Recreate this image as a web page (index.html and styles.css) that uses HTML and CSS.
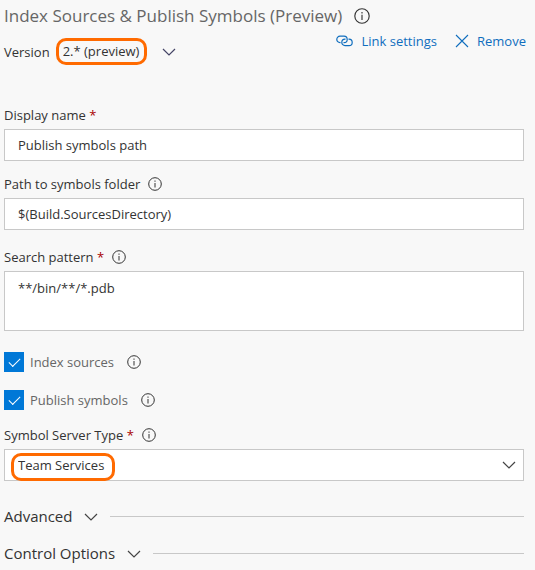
FILE: index.html
```html
<!DOCTYPE html>
<html lang="en">
<head>
<meta charset="utf-8">
<meta name="viewport" content="width=device-width, initial-scale=1">
<title>Index Sources &amp; Publish Symbols</title>
<link rel="stylesheet" href="styles.css">
</head>
<body>
<svg class="defs" aria-hidden="true">
  <symbol id="info" viewBox="0 0 14 14">
    <circle cx="7" cy="7" r="6.300" fill="none" stroke="currentColor" stroke-width="1"/>
    <path d="M7 6v4.500M7 3.500v1.300" fill="none" stroke="currentColor" stroke-width="1"/>
  </symbol>
  <symbol id="chevron" viewBox="0 0 14 8">
    <path d="M1 1l6 6 6-6" fill="none" stroke="currentColor" stroke-width="1.2"/>
  </symbol>
</svg>
<main class="task">
  <header>
    <h1 class="title">Index Sources &amp; Publish Symbols (Preview)
      <svg class="info info-large" role="img" aria-label="Info"><use href="#info"/></svg></h1>
    <div class="toolbar">
      <div class="version">
        <label for="version">Version</label>
        <span class="ring"><select id="version"><option>2.* (preview)</option></select></span>
        <svg class="chevron" aria-hidden="true"><use href="#chevron"/></svg>
      </div>
      <div class="actions">
        <button type="button" class="action">
          <svg class="link-icon" viewBox="0 0 17 12" aria-hidden="true"><path d="M4.500 7.600H4A3.200 3.200 0 0 1 4 1.200H8A3.200 3.200 0 0 1 8 7.600H7.500M12.500 4.200H13A3.200 3.200 0 0 1 13 10.600H9A3.200 3.200 0 0 1 9 4.200H9.500" fill="none" stroke="currentColor" stroke-width="1.200"/></svg>
          Link settings</button>
        <button type="button" class="action">
          <svg class="remove-icon" viewBox="0 0 14 14" aria-hidden="true"><path d="M1 1l12 12M13 1L1 13" fill="none" stroke="currentColor" stroke-width="1.1"/></svg>
          Remove</button>
      </div>
    </div>
  </header>
  <form>
    <div class="field">
      <div class="caption"><label for="name">Display name <span class="req">*</span></label></div>
      <input class="box" id="name" type="text" value="Publish symbols path">
    </div>
    <div class="field">
      <div class="caption"><label for="path">Path to symbols folder</label>
        <svg class="info" role="img" aria-label="Info"><use href="#info"/></svg></div>
      <input class="box" id="path" type="text" value="$(Build.SourcesDirectory)">
    </div>
    <div class="field field-pattern">
      <div class="caption"><label for="pattern">Search pattern <span class="req">*</span></label>
        <svg class="info" role="img" aria-label="Info"><use href="#info"/></svg></div>
      <textarea class="box area" id="pattern">**/bin/**/*.pdb</textarea>
    </div>
    <div class="checks">
      <div class="check"><input type="checkbox" id="index" checked><label for="index">Index sources</label>
        <svg class="info" role="img" aria-label="Info"><use href="#info"/></svg></div>
      <div class="check"><input type="checkbox" id="publish" checked><label for="publish">Publish symbols</label>
        <svg class="info" role="img" aria-label="Info"><use href="#info"/></svg></div>
    </div>
    <div class="field">
      <div class="caption"><label for="server">Symbol Server Type <span class="req">*</span></label>
        <svg class="info" role="img" aria-label="Info"><use href="#info"/></svg></div>
      <div class="select-wrap">
        <select class="box" id="server"><option>Team Services</option></select>
        <span class="ring ring-over"></span>
        <svg class="chevron chevron-over" aria-hidden="true"><use href="#chevron"/></svg>
      </div>
    </div>
    <div class="sections">
      <button type="button" class="section">Advanced <svg class="chevron" aria-hidden="true"><use href="#chevron"/></svg></button>
      <button type="button" class="section">Control Options <svg class="chevron" aria-hidden="true"><use href="#chevron"/></svg></button>
    </div>
  </form>
</main>
</body>
</html>
```
FILE: styles.css
```css
* { box-sizing: border-box; }

body {
  margin: 0;
  background: #f8f8f8;
  color: #333;
  font: 13px/20px "Open Sans", "Noto Sans", sans-serif;
}

input, select, textarea, button {
  margin: 0;
  font: inherit;
  color: inherit;
}

select {
  appearance: none;
  padding: 0;
  border: 0;
  background: transparent;
}

svg { display: block; flex: none; }
.defs { position: absolute; width: 0; height: 0; }
.task { padding: 0 11px 4px 4px; }

.title {
  display: flex;
  align-items: center;
  gap: 12px;
  margin: 0;
  color: #666;
  font-size: 17px;
  font-weight: 400;
  line-height: 32px;
}

.info { width: 14px; height: 14px; color: #333; }
.info-large { width: 16px; height: 16px; }
.chevron { width: 14px; height: 8px; color: #444; }

.toolbar {
  display: flex;
  justify-content: space-between;
  align-items: flex-start;
}

.version { display: flex; align-items: center; padding-top: 6px; }
.version .chevron { margin-left: 15px; color: #446; }

.ring {
  border: 3px solid #ff6a00;
  border-radius: 10px;
}

.version .ring { display: flex; margin-left: 6px; padding: 0 4px 1px 4px; }

.actions { display: flex; gap: 18px; margin-right: -2px; }

.action {
  display: flex;
  align-items: center;
  gap: 8px;
  padding: 0;
  border: 0;
  background: none;
  color: #106ebe;
  line-height: 18px;
}

.link-icon { width: 17px; height: 12px; }
.remove-icon { width: 14px; height: 14px; }

form { display: flex; flex-direction: column; padding-top: 40px; }
.field { margin-bottom: 13px; }
.field-pattern { margin: 4px 0 21px; }

.caption { display: flex; align-items: center; gap: 8px; margin-bottom: 4px; }
.req { color: #a80000; }

.box {
  display: block;
  width: 100%;
  height: 32px;
  padding: 0 13px;
  border: 1px solid #c8c8c8;
  border-radius: 0;
  background: #fff;
}

.area { height: 60px; padding-top: 6px; resize: none; }

.checks { display: grid; gap: 18px; margin-bottom: 15px; }
.check { display: flex; align-items: center; color: #666; }
.check label { margin: 0 13px 0 6px; }

.check input {
  appearance: none;
  display: grid;
  place-items: center;
  width: 20px;
  height: 20px;
  background: #0078d7;
}

.check input:checked::before {
  content: "";
  width: 10px;
  height: 5px;
  margin-bottom: 3px;
  border: solid #fff;
  border-width: 0 0 1px 1px;
  transform: rotate(-45deg);
}

.select-wrap { position: relative; }
.ring-over { position: absolute; left: 7px; top: 4px; width: 104px; height: 28px; pointer-events: none; }
.chevron-over { position: absolute; right: 8px; top: 12px; pointer-events: none; }

.sections { display: grid; gap: 12px; padding-top: 10px; }

.section {
  display: flex;
  align-items: center;
  gap: 12px;
  width: 100%;
  padding: 0;
  border: 0;
  background: none;
  font-size: 15px;
  line-height: 25px;
}

.section::after { content: ""; flex: 1; height: 1px; background: #c8c8c8; }
```
